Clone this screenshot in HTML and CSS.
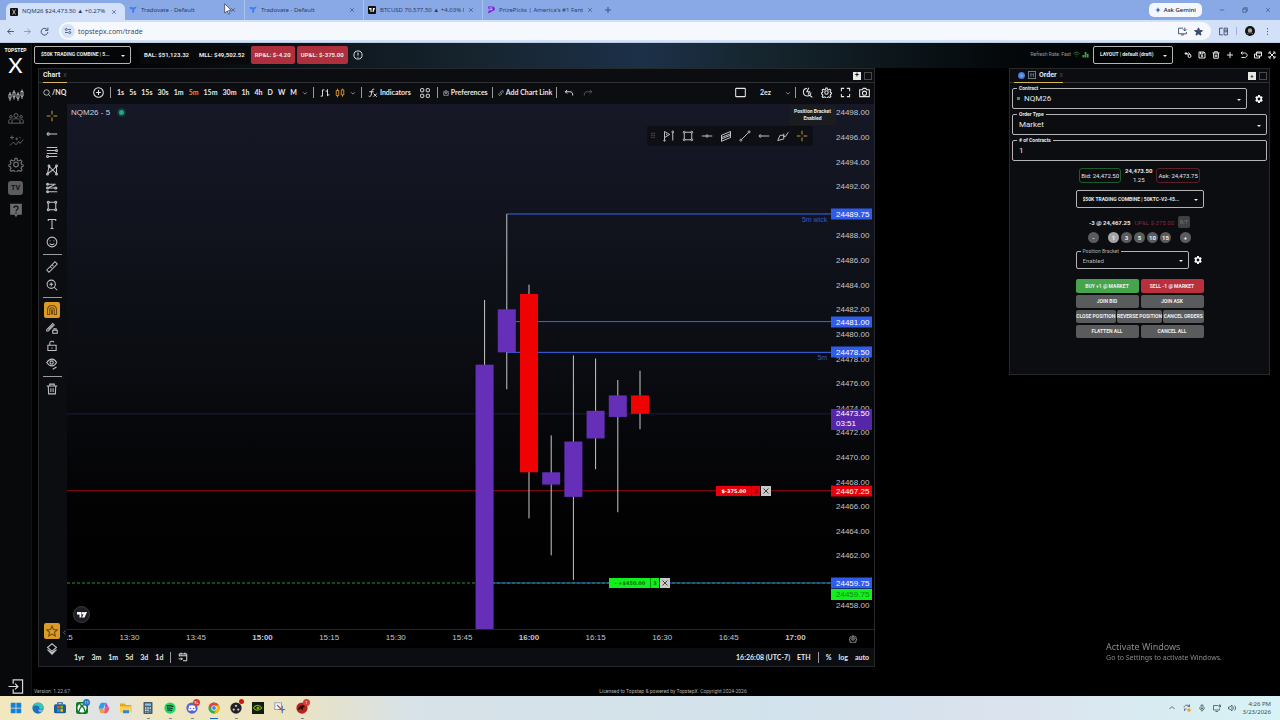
FILE: index.html
```
<!DOCTYPE html>
<html lang="en">
  <head>
    <meta charset="UTF-8" />
    <meta name="viewport" content="width=device-width, initial-scale=1" />
    <title>NQM26 $24,473.50 ▲ +0.27%</title>
    <link rel="stylesheet" href="styles.css">
  </head>
  <body>
    <svg class="sprite" aria-hidden="true">
      <symbol id="close" viewBox="0 0 16 16"><path d="M3 3l10 10M13 3L3 13" /></symbol>
      <symbol id="plus" viewBox="0 0 16 16"><path d="M8 2v12M2 8h12" /></symbol>
      <symbol id="chevron" viewBox="0 0 16 16"><path d="M3 6l5 5 5-5" /></symbol>
      <symbol id="back" viewBox="0 0 16 16"><path d="M14 8H3M8 3L3 8l5 5" /></symbol>
      <symbol id="forward" viewBox="0 0 16 16"><path d="M2 8h11M8 3l5 5-5 5" /></symbol>
      <symbol id="reload" viewBox="0 0 16 16"><path d="M13 5a6 6 0 1 0 1 4M14 1v5H9" /></symbol>
      <symbol id="tune" viewBox="0 0 16 16"><path d="M8 5h6M2 11h6" /><circle cx="4.500" cy="5" r="2" /><circle cx="11.500" cy="11" r="2" /></symbol>
      <symbol id="tradovate" viewBox="0 0 16 16"><path fill="#3f7cf0" stroke="none" d="M1 2l8 1 6-2-1 4-4 1 1 2-2 7-3-4 1-4-5-1z" /></symbol>
      <symbol id="star" viewBox="0 0 16 16"><path d="M8 1.500l2 4.500 5 .5-3.700 3.200 1.100 4.800L8 12l-4.400 2.500 1.100-4.800L1 6.500 6 6z" /></symbol>
      <symbol id="gear" viewBox="0 0 16 16"><circle cx="8" cy="8" r="2.500" /><path d="M7 1.500h2l.5 2 1.500.7 1.900-1 1.400 1.400-1 1.900.7 1.500 1.500.4v1.600l-1.500.5-.7 1.500 1 1.900-1.400 1.400-1.900-1-1.500.7-.5 1.500H7l-.5-1.500-1.500-.7-1.900 1-1.400-1.400 1-1.900-.7-1.500L.5 10V8.400L2 8l.7-1.500-1-1.900 1.400-1.400 1.900 1 1.500-.7z" /></symbol>
      <symbol id="gear-solid" viewBox="0 0 16 16"><path fill="currentColor" stroke="none" fill-rule="evenodd" d="M6.300 0h3.400l.5 2.300 1.400.8 2.200-.7 1.700 3-1.700 1.500v2.200l1.700 1.500-1.700 3-2.200-.7-1.400.8-.5 2.300H6.300l-.5-2.300-1.400-.8-2.200.7-1.700-3 1.700-1.500V6.900L.5 5.400l1.700-3 2.200.7 1.400-.8zM8 5.200a2.800 2.800 0 1 0 0 5.600 2.800 2.800 0 0 0 0-5.600z" /></symbol>
      <symbol id="candles" viewBox="0 0 24 20"><path d="M3 5v3M3 14v4M9 2v3M9 12v4M15 5v3M15 14v4M21 1v3M21 11v4M1.500 8h3v6h-3zM7.500 5h3v7h-3zM13.500 8h3v6h-3zM19.500 4h3v7h-3z" /></symbol>
      <symbol id="people" viewBox="0 0 24 18"><circle cx="12" cy="4.500" r="3" /><circle cx="4.500" cy="6.500" r="2" /><circle cx="19.500" cy="6.500" r="2" /><path d="M6 16v-3c0-5 12-5 12 0v3zM6 16H1v-3c0-2 2-3 4-3M18 16h5v-3c0-2-2-3-4-3" /></symbol>
      <symbol id="insights" viewBox="0 0 24 20"><path d="M3 16l5-5 4 4 4-5 2 3 5-6" /><path d="M6 1v6M3 4h6M13 4v4M11 6h4M17 3l2 2" /></symbol>
      <symbol id="help" viewBox="0 0 16 18"><path fill="currentColor" stroke="none" d="M1 1h14v13h-5l-2 3-2-3H1z" /><path stroke="#08090b" d="M5.500 6c0-3 5-3 5 0 0 2-2.500 2-2.500 4M8 11.500V13" /></symbol>
      <symbol id="logout" viewBox="0 0 16 16"><path d="M5 5V1h10v14H5v-4M0 8h10M7 5l3 3-3 3" /></symbol>
      <symbol id="search" viewBox="0 0 16 16"><circle cx="7" cy="7" r="5.500" /><path d="M11 11l4 4" /></symbol>
      <symbol id="plus-circle" viewBox="0 0 16 16"><circle cx="8" cy="8" r="7" /><path d="M8 4.500v7M4.500 8h7" /></symbol>
      <symbol id="info" viewBox="0 0 16 16"><circle cx="8" cy="8" r="6.500" /><path d="M8 4v5M8 11v1.500" /></symbol>
      <symbol id="bars" viewBox="0 0 16 16"><path d="M4 3v10M1 13h3M4 3h3M12 2v11M9 5h3M12 11h3" /></symbol>
      <symbol id="candle" viewBox="0 0 16 16"><path d="M2 4h4v8H2zM10 3h4v8h-4zM4 1v3M4 12v3M12 1v2M12 11v3" /></symbol>
      <symbol id="fx" viewBox="0 0 16 16"><path d="M10 2C7 1 6.500 3 6 6L5 11c-.5 3-2 3-4 2M2 6h7M9 9l5 5M14 9l-5 5" /></symbol>
      <symbol id="grid" viewBox="0 0 16 16"><rect x="1" y="1" width="5" height="5" rx="1" /><rect x="10" y="1" width="5" height="5" rx="1" /><rect x="1" y="10" width="5" height="5" rx="1" /><rect x="10" y="10" width="5" height="5" rx="1" /></symbol>
      <symbol id="link" viewBox="0 0 16 16"><path d="M7 9c-1-1-1-3 0-4l2.500-2.500c3-3 6 1 4 3.500L12 7.500M9 7c1 1 1 3 0 4l-2.500 2.500c-3 3-6-1-4-3.500L4 8.500" /></symbol>
      <symbol id="undo" viewBox="0 0 16 16"><path d="M5 3L2 6l3 3M2 6h7c4 0 5 2 5 6" /></symbol>
      <symbol id="redo" viewBox="0 0 16 16"><path d="M11 3l3 3-3 3M14 6H7c-4 0-5 2-5 6" /></symbol>
      <symbol id="square" viewBox="0 0 16 16"><rect x="1" y="2" width="14" height="12" rx="1" /></symbol>
      <symbol id="quick" viewBox="0 0 16 16"><path d="M7 2a5.500 5.500 0 1 0 6 6M11 12l4 3M10 1L7 7h4l-2 4" /></symbol>
      <symbol id="full" viewBox="0 0 16 16"><path d="M2 6V2h4M10 2h4v4M14 10v4h-4M6 14H2v-4" /></symbol>
      <symbol id="camera" viewBox="0 0 16 16"><path d="M1 4h4l1-2h4l1 2h4v10H1z" /><circle cx="8" cy="9" r="3" /></symbol>
      <symbol id="cross" viewBox="0 0 16 16"><path d="M8 1v5M8 10v5M1 8h5M10 8h5" /></symbol>
      <symbol id="ray" viewBox="0 0 16 16"><circle cx="3" cy="8" r="1.500" /><path d="M4.500 8H15" /></symbol>
      <symbol id="hline" viewBox="0 0 16 16"><circle cx="8" cy="8" r="1.500" /><path d="M1 8h5.500M9.500 8H15" /></symbol>
      <symbol id="fib" viewBox="0 0 16 16"><path d="M1 2h14M1 6h12M1 10h14M3 14h12" /><circle cx="14" cy="6" r="1.300" /><circle cx="2" cy="14" r="1.300" /></symbol>
      <symbol id="pattern" viewBox="0 0 16 16"><path d="M2 13L4 3l5 5 5-5v10L9 8zM2 13l7-5" /><circle cx="2" cy="13.500" r="1.200" /><circle cx="14" cy="13.500" r="1.200" /><circle cx="4" cy="2.500" r="1.200" /><circle cx="14" cy="2.500" r="1.200" /></symbol>
      <symbol id="forecast" viewBox="0 0 16 16"><path d="M1 3h12M1 8h14M1 13h14M4 7l7-3" /><circle cx="2" cy="3" r="1.300" /><circle cx="2" cy="8" r="1.300" /><circle cx="13" cy="8" r="1.300" /><circle cx="2" cy="13" r="1.300" /></symbol>
      <symbol id="rect" viewBox="0 0 16 16"><path d="M4 3h8M4 13h8M3 4v8M13 4v8" /><circle cx="3" cy="3" r="1.300" /><circle cx="13" cy="3" r="1.300" /><circle cx="3" cy="13" r="1.300" /><circle cx="13" cy="13" r="1.300" /></symbol>
      <symbol id="text" viewBox="0 0 16 16"><path d="M3 4V2h10v2M8 2v12M6 14h4" /></symbol>
      <symbol id="smile" viewBox="0 0 16 16"><circle cx="8" cy="8" r="6.500" /><path d="M5.500 6v1M10.500 6v1M5 10c1 2 5 2 6 0" /></symbol>
      <symbol id="ruler" viewBox="0 0 16 16"><path d="M1 12L12 1l3 3L4 15zM6 8l1.500 1.500M8.500 5.500L10 7" /></symbol>
      <symbol id="zoom" viewBox="0 0 16 16"><circle cx="7" cy="7" r="5.500" /><path d="M11 11l4 4M7 4.500v5M4.500 7h5" /></symbol>
      <symbol id="magnet" viewBox="0 0 16 16"><path d="M2 14V8c0-8 12-8 12 0v6h-3V8c0-4-6-4-6 0v6zM7.500 14V8h1v6" /></symbol>
      <symbol id="pencil-lock" viewBox="0 0 16 16"><path d="M1 10L9 2l2 2-8 8H1zM3 10l6-6M9 11h6v4H9zM10.500 11V9h3v2" /></symbol>
      <symbol id="lock" viewBox="0 0 16 16"><path d="M2.500 7h11v7h-11zM5 7V4c0-3 5-3 5.500-1M8 10v1.500" /></symbol>
      <symbol id="eye" viewBox="0 0 16 16"><path d="M1 6c4-6 10-6 13 0-3 6-9 6-13 0zM9 15l5-3" /><circle cx="7.500" cy="6" r="2.200" /></symbol>
      <symbol id="trash" viewBox="0 0 16 16"><path d="M1 4h14M5 4V1.500h6V4M3 4l.5 10.500h9L13 4M6.500 7v5M9.500 7v5" /></symbol>
      <symbol id="layers" viewBox="0 0 16 16"><path d="M8 1l6 5-6 5-6-5z" /><path fill="currentColor" d="M2 9l6 4 6-4-6 6z" /></symbol>
      <symbol id="position" viewBox="0 0 16 16"><path d="M2 14V2l7 4-7 4M5 5v2M13 3v11" /><circle cx="2" cy="14" r="1" /><circle cx="13" cy="2.500" r="1.200" /></symbol>
      <symbol id="channel" viewBox="0 0 16 16"><path d="M2 7l12-5v3L2 10zM2 12l12-5v3L2 15zM2 7v8M14 2v8" /></symbol>
      <symbol id="trend" viewBox="0 0 16 16"><circle cx="2.500" cy="13.500" r="1.300" /><circle cx="13.500" cy="2.500" r="1.300" /><path d="M3.500 12.500l9-9" /></symbol>
      <symbol id="brush" viewBox="0 0 16 16"><path d="M1 14l3-7h5v5zM8 8l3 1 4-6M9 5v3" /></symbol>
      <symbol id="calendar" viewBox="0 0 16 16"><path d="M2 7V3h12v11H8M2 6h12M5 1v3M11 1v3M1 11h6M5 9l2 2-2 2" /></symbol>
      <symbol id="save" viewBox="0 0 16 16"><path d="M2 2h10l2 2v10H2zM5 2v4h5V2" /><circle cx="8" cy="10" r="1.500" /></symbol>
      <symbol id="history" viewBox="0 0 16 16"><path d="M5 1L2 4l3 3M2 4h7c7 0 7 9 0 9H3" /></symbol>
      <symbol id="windows" viewBox="0 0 16 16"><path d="M5 2h10v8H5zM5 6H1v8h10v-4M5 4h10" /></symbol>
      <symbol id="expand" viewBox="0 0 16 16"><path d="M2 6V2h4M10 2h4v4M14 10v4h-4M6 14H2v-4M3 3l10 10M13 3L3 13" /></symbol>
      <symbol id="swap" viewBox="0 0 16 16"><path d="M5 2L2 5l3 3M2 5h5l1 3M8 3l5 4" /><circle cx="11" cy="10" r="3" /></symbol>
      <symbol id="wifi" viewBox="0 0 16 16"><path d="M1 6c4-4 10-4 14 0M4 9c3-2 5-2 8 0M7 12h2" /></symbol>
      <symbol id="signal" viewBox="0 0 16 16"><path fill="currentColor" stroke="none" d="M1 9h4v6H1zM6 2h4v13H6zM11 6h4v9h-4z" /></symbol>
    </svg>

    <div class="tabs">
      <div class="tab active">
        <svg class="fav" viewBox="0 0 16 16"><rect width="16" height="16" rx="2" fill="#111" stroke="none" /><path stroke="#ddd" d="M5 3l6 10M11 3L5 13" /></svg>
        <span>NQM26 $24,473.50 ▲ +0.27%</span>
        <button aria-label="Close"><svg><use href="#close" /></svg></button>
      </div>
      <div class="tab">
        <svg class="fav"><use href="#tradovate" /></svg>
        <span>Tradovate - Default</span>
        <button aria-label="Close"><svg><use href="#close" /></svg></button>
      </div>
      <div class="tab">
        <svg class="fav"><use href="#tradovate" /></svg>
        <span>Tradovate - Default</span>
        <button aria-label="Close"><svg><use href="#close" /></svg></button>
      </div>
      <div class="tab">
        <svg class="fav" viewBox="0 0 16 16"><rect width="16" height="16" rx="2" fill="#111" stroke="none" /><path fill="#fff" stroke="none" d="M2 4h5v8H5V7H2zM10 4h4l-3 8H9z" /></svg>
        <span>BTCUSD 70,577.50 ▲ +4.03% P</span>
        <button aria-label="Close"><svg><use href="#close" /></svg></button>
      </div>
      <div class="tab">
        <svg class="fav" viewBox="0 0 16 16"><path fill="#7b16d9" stroke="none" d="M2 1h9c6 0 6 9 0 9l-9 5 2-7z" /><path stroke="#fff" d="M5 4h6M4 8l7-1" /></svg>
        <span>PrizePicks | America's #1 Fanta</span>
        <button aria-label="Close"><svg><use href="#close" /></svg></button>
      </div>
      <button class="new-tab" aria-label="New tab"><svg><use href="#plus" /></svg></button>
      <button class="gemini">
        <svg viewBox="0 0 16 16"><path fill="#2f6fd0" stroke="none" d="M8 0c1 5 3 7 8 8-5 1-7 3-8 8-1-5-3-7-8-8 5-1 7-3 8-8z" /></svg>
        Ask Gemini
      </button>
      <div class="win">
        <button aria-label="Minimize"><svg viewBox="0 0 16 16"><path d="M2 8h12" /></svg></button>
        <button aria-label="Restore"><svg viewBox="0 0 16 16"><path d="M2 5h9v9H2zM5 5V2h9v9h-3" /></svg></button>
        <button aria-label="Close window"><svg><use href="#close" /></svg></button>
      </div>
      <svg class="cursor" viewBox="0 0 12 18"><path fill="#fff" stroke="#56617c" d="M1 1v14l4-3 2 5 2-1-2-5h4z" /></svg>
    </div>

    <div class="address">
      <button aria-label="Back"><svg><use href="#back" /></svg></button>
      <button aria-label="Forward" class="off"><svg><use href="#forward" /></svg></button>
      <button aria-label="Reload"><svg><use href="#reload" /></svg></button>
      <div class="omnibox">
        <i><svg><use href="#tune" /></svg></i>
        <input type="text" aria-label="Address" value="topstepx.com/trade" />
        <svg viewBox="0 0 16 16"><path d="M9 2H1v10h14V9M5 14h6M12 1v6M9 4l3 3 3-3" /></svg>
        <svg class="fill"><use href="#star" /></svg>
      </div>
      <svg class="ext" viewBox="0 0 16 16"><path d="M7 2H1v12h6M9 2h6v12H9z" /><circle cx="12" cy="7" r="2" /></svg>
      <span class="bar"></span>
      <svg class="avatar" viewBox="0 0 16 16"><circle cx="8" cy="8" r="8" fill="#111" stroke="none" /><circle cx="8" cy="7" r="3.500" fill="#a9a99f" stroke="none" /><path stroke="#777" d="M3 13c3-3 7-3 10 0" /></svg>
      <svg viewBox="0 0 16 16"><path d="M8 2v2M8 7v2M8 12v2" /></svg>
    </div>

    <div class="app">
      <nav>
        <a class="logo" href="#"><small>TOPSTEP</small><b>X</b></a>
        <a class="on" href="#" aria-label="Trade"><svg><use href="#candles" /></svg></a>
        <a href="#" aria-label="Community"><svg><use href="#people" /></svg></a>
        <a href="#" aria-label="Insights"><svg><use href="#insights" /></svg></a>
        <a href="#" aria-label="Settings"><svg><use href="#gear" /></svg></a>
        <a href="#" aria-label="TV"><span class="tv">TV</span></a>
        <a href="#" aria-label="Help"><svg><use href="#help" /></svg></a>
        <a class="out" href="#" aria-label="Log out"><svg><use href="#logout" /></svg></a>
      </nav>

      <div class="main">
        <header>
          <div class="select account">
            <select aria-label="Account"><option>$50K TRADING COMBINE | 5...</option></select>
          </div>
          <span class="stat">BAL: $51,123.32</span>
          <span class="stat">MLL: $49,502.52</span>
          <span class="stat red">RP&amp;L: $-4.20</span>
          <span class="stat red">UP&amp;L: $-375.00</span>
          <svg class="info"><use href="#info" /></svg>
          <span class="rate">Refresh Rate: Fast</span>
          <svg class="green"><use href="#wifi" /></svg>
          <svg class="green"><use href="#signal" /></svg>
          <div class="select layout">
            <select aria-label="Layout"><option>LAYOUT | default (draft)</option></select>
          </div>
          <div class="tools">
            <button aria-label="Swap"><svg><use href="#swap" /></svg></button>
            <button aria-label="Save"><svg><use href="#save" /></svg></button>
            <button aria-label="Delete"><svg><use href="#trash" /></svg></button>
            <button aria-label="Add"><svg><use href="#plus" /></svg></button>
            <button aria-label="Reset"><svg><use href="#history" /></svg></button>
            <button aria-label="Windows"><svg><use href="#windows" /></svg></button>
            <button aria-label="Full screen"><svg><use href="#expand" /></svg></button>
          </div>
        </header>

        <div class="workspace">
          <section class="panel chart">
            <div class="panel-head">
              <div class="panel-tab">Chart <em>x</em></div>
              <button class="add" aria-label="Add tab">+</button>
              <button class="max" aria-label="Maximize"></button>
            </div>

            <div class="chart-bar">
              <button class="symbol"><svg><use href="#search" /></svg>/NQ</button>
              <button aria-label="Compare"><svg class="big"><use href="#plus-circle" /></svg></button>
              <hr />
              <div class="times">
                <button>1s</button><button>5s</button><button>15s</button><button>30s</button><button>1m</button><button class="on">5m</button><button>15m</button><button>30m</button><button>1h</button><button>4h</button><button>D</button><button>W</button><button>M</button>
                <button aria-label="More intervals"><svg class="small"><use href="#chevron" /></svg></button>
              </div>
              <hr />
              <div class="kinds">
                <button aria-label="Bars"><svg><use href="#bars" /></svg></button>
                <button aria-label="Candles" class="on"><svg><use href="#candle" /></svg></button>
                <button aria-label="More types"><svg class="small"><use href="#chevron" /></svg></button>
              </div>
              <hr />
              <div class="studies">
                <button><svg><use href="#fx" /></svg>Indicators</button>
                <button aria-label="Templates"><svg><use href="#grid" /></svg></button>
              </div>
              <hr />
              <button class="pref"><svg class="small"><use href="#gear" /></svg>Preferences</button>
              <hr />
              <button class="pref"><svg class="small"><use href="#link" /></svg>Add Chart Link</button>
              <hr />
              <div class="undo">
                <button aria-label="Undo"><svg><use href="#undo" /></svg></button>
                <button aria-label="Redo" class="off"><svg><use href="#redo" /></svg></button>
              </div>
              <div class="saved">
                <button aria-label="Layout"><svg class="big"><use href="#square" /></svg></button>
                <button>2ez</button>
                <button aria-label="Saved layouts"><svg class="small"><use href="#chevron" /></svg></button>
              </div>
              <hr />
              <div class="views">
                <button aria-label="Quick search"><svg class="big"><use href="#quick" /></svg></button>
                <button aria-label="Chart settings"><svg class="big"><use href="#gear" /></svg></button>
                <button aria-label="Fullscreen"><svg class="big"><use href="#full" /></svg></button>
                <button aria-label="Snapshot"><svg class="big"><use href="#camera" /></svg></button>
              </div>
            </div>

            <div class="chart-body">
              <div class="draw">
                <button class="gold" aria-label="Cross"><svg><use href="#cross" /></svg></button>
                <button aria-label="Ray"><svg><use href="#ray" /></svg></button>
                <button aria-label="Fib"><svg><use href="#fib" /></svg></button>
                <button aria-label="Pattern"><svg><use href="#pattern" /></svg></button>
                <button aria-label="Forecast"><svg><use href="#forecast" /></svg></button>
                <button aria-label="Shapes"><svg><use href="#rect" /></svg></button>
                <button aria-label="Text"><svg><use href="#text" /></svg></button>
                <button aria-label="Icons"><svg><use href="#smile" /></svg></button>
                <hr />
                <button aria-label="Measure"><svg><use href="#ruler" /></svg></button>
                <button aria-label="Zoom in"><svg><use href="#zoom" /></svg></button>
                <hr />
                <button class="lit" aria-label="Magnet"><svg><use href="#magnet" /></svg></button>
                <button aria-label="Stay in drawing mode"><svg><use href="#pencil-lock" /></svg></button>
                <button aria-label="Lock drawings"><svg><use href="#lock" /></svg></button>
                <button aria-label="Hide drawings"><svg><use href="#eye" /></svg></button>
                <hr />
                <button aria-label="Remove"><svg><use href="#trash" /></svg></button>
                <button class="lit fav-tools" aria-label="Favorites"><svg><use href="#star" /></svg></button>
                <button aria-label="Object tree"><svg><use href="#layers" /></svg></button>
                <svg class="fold" viewBox="0 0 16 16"><path d="M11 2L5 8l6 6" /></svg>
              </div>

              <div class="view">
                <div class="price-row">
                  <div class="plot" id="plot">
                    <svg class="lines" id="lines"></svg>
                    <div class="legend">NQM26 - 5 <i></i></div>
                    <div class="float">
                      <span class="grip">⠿</span>
                      <button aria-label="Position"><svg><use href="#position" /></svg></button>
                      <button aria-label="Rectangle"><svg><use href="#rect" /></svg></button>
                      <button aria-label="Horizontal line"><svg><use href="#hline" /></svg></button>
                      <button aria-label="Channel"><svg><use href="#channel" /></svg></button>
                      <button aria-label="Trend line"><svg><use href="#trend" /></svg></button>
                      <button aria-label="Horizontal ray"><svg><use href="#ray" /></svg></button>
                      <button aria-label="Brush"><svg><use href="#brush" /></svg></button>
                      <button aria-label="Cross" class="gold"><svg><use href="#cross" /></svg></button>
                    </div>
                    <div class="tip">Position Bracket<br />Enabled</div>
                    <a class="tv-logo" href="#" aria-label="TradingView"><svg viewBox="0 0 16 16"><path fill="#fff" stroke="none" d="M0 3h7v9H4V7H0zM12 3h4l-4 9H8z" /><circle cx="9.500" cy="5" r="2" fill="#fff" stroke="none" /></svg></a>
                  </div>
                  <div class="prices" id="prices"></div>
                </div>
                <div class="time-row">
                  <div class="hours" id="hours"></div>
                  <button aria-label="Scale settings"><svg><use href="#gear" /></svg></button>
                </div>
                <div class="range">
                  <button>1yr</button><button>3m</button><button>1m</button><button>5d</button><button>3d</button><button>1d</button>
                  <hr />
                  <button aria-label="Go to date"><svg><use href="#calendar" /></svg></button>
                  <span class="clock">16:26:08 (UTC-7)</span>
                  <button>ETH</button>
                  <hr />
                  <button>%</button>
                  <button>log</button>
                  <button>auto</button>
                </div>
              </div>
            </div>
          </section>

          <section class="panel order">
            <div class="panel-head">
              <div class="panel-tab"><i class="ball"></i><i class="box">H</i>Order <em>x</em></div>
              <button class="add" aria-label="Add tab">+</button>
              <button class="max" aria-label="Maximize"></button>
            </div>
            <div class="order-body">
              <div class="with-gear">
                <div class="field select contract">
                  <label for="contract">Contract</label>
                  <select id="contract"><option>NQM26</option></select>
                </div>
                <button aria-label="Contract settings"><svg><use href="#gear-solid" /></svg></button>
              </div>
              <div class="field select">
                <label for="type">Order Type</label>
                <select id="type"><option>Market</option></select>
              </div>
              <div class="field">
                <label for="count"># of Contracts</label>
                <input type="text" id="count" value="1" />
              </div>

              <div class="ticket">
                <div class="quote">
                  <span class="bid">Bid: 24,472.50</span>
                  <div><b>24,473.50</b>1.25</div>
                  <span class="ask">Ask: 24,473.75</span>
                </div>
                <div class="select combine">
                  <select aria-label="Trading account"><option>$50K TRADING COMBINE | 50KTC-V2-45...</option></select>
                </div>
                <div class="position">
                  <b>-3 @ 24,467.25</b>
                  <span>UP&amp;L $-375.00</span>
                  <button disabled>R/T</button>
                </div>
                <div class="sizes">
                  <button>-</button>
                  <div>
                    <button class="on">1</button><button>3</button><button>5</button><button>10</button><button>15</button>
                  </div>
                  <button>+</button>
                </div>
                <div class="with-gear">
                  <div class="field select bracket">
                    <label for="bracket">Position Bracket</label>
                    <select id="bracket"><option>Enabled</option></select>
                  </div>
                  <button aria-label="Bracket settings"><svg><use href="#gear-solid" /></svg></button>
                </div>
                <div class="actions">
                  <div class="trade">
                    <button class="buy">BUY +1 @ MARKET</button>
                    <button class="sell">SELL -1 @ MARKET</button>
                  </div>
                  <div><button>JOIN BID</button><button>JOIN ASK</button></div>
                  <div class="three"><button>CLOSE POSITION</button><button>REVERSE POSITION</button><button>CANCEL ORDERS</button></div>
                  <div><button>FLATTEN ALL</button><button>CANCEL ALL</button></div>
                </div>
              </div>
            </div>
          </section>
        </div>

        <footer>
          <span>Version: 1.22.67</span>
          <p>Licensed to Topstep &amp; powered by TopstepX. Copyright 2024-2026</p>
        </footer>
      </div>
    </div>

    <div class="taskbar">
      <a href="#" aria-label="Start"><svg viewBox="0 0 16 16"><path fill="#1480d8" d="M1 1h6.500v6.500H1zM8.500 1H15v6.500H8.500zM1 8.500h6.500V15H1zM8.500 8.500H15V15H8.500z" /></svg></a>
      <a href="#" aria-label="Edge"><svg viewBox="0 0 16 16"><circle cx="8" cy="8" r="7.500" fill="#1673c4" /><path fill="#38c7b5" d="M1 6c2-7 14-7 14.500 1 0 4-5 4-6 2 2-4-4-6-8.500-3z" /><path fill="#f4efdc" d="M9 9c0 3 4 3 6 1.500-1 2-4 3-6 1.500z" /></svg></a>
      <a href="#" aria-label="Store"><svg viewBox="0 0 16 16"><rect y="3" width="16" height="12" rx="2" fill="#1a5f9c" /><path fill="none" stroke="#1a5f9c" d="M5 3V1h6v2" /><path fill="#f25022" d="M4 5h3.500v3.500H4z" /><path fill="#7fba00" d="M8.500 5H12v3.500H8.500z" /><path fill="#00a4ef" d="M4 9.500h3.500V13H4z" /><path fill="#ffb900" d="M8.500 9.500H12V13H8.500z" /></svg></a>
      <a href="#" aria-label="Xbox"><svg viewBox="0 0 16 16"><rect width="16" height="16" rx="3" fill="#0e7a2a" /><circle cx="8" cy="8" r="6" fill="#fff" /><path fill="none" stroke="#0e7a2a" stroke-width="2" d="M4 13c0-4 2-6 4-8 2 2 4 4 4 8M5 3l3 2 3-2" /></svg><i class="badge blue">11</i></a>
      <a href="#" aria-label="Copilot"><svg viewBox="0 0 16 16"><path fill="#2aa0e8" d="M5 1h5L7 9H1c0-3 2-8 4-8z" /><path fill="#c04bd8" d="M10 1c3 0 2 5 5 6H9z" /><path fill="#f0a030" d="M1 9h6l2 6H5c-3 0-2-4-4-6z" /><path fill="#ee5a6a" d="M9 7h6c0 3-2 8-5 8H8z" /></svg></a>
      <a href="#" aria-label="Files"><svg viewBox="0 0 16 16"><path fill="#e8a520" d="M0 2h6l2 2h7v9H0z" /><path fill="#fbd254" d="M0 6h16v8H0z" /><path fill="#2f86d8" d="M4 11h8v4H4z" /></svg></a>
      <a class="open" href="#" aria-label="Calculator"><svg viewBox="0 0 16 16"><rect x="2" width="12" height="16" rx="1" fill="#4a5a68" /><path fill="#7fc8ee" d="M4 2h8v3H4z" /><path fill="#dfe6ea" d="M4 7h2v2H4zM7 7h2v2H7zM10 7h2v2h-2zM4 10h2v2H4zM7 10h2v2H7zM4 13h2v1H4zM7 13h2v1H7z" /><path fill="#38a0e0" d="M10 10h2v4h-2z" /></svg></a>
      <a class="open" href="#" aria-label="Spotify"><svg viewBox="0 0 16 16"><circle cx="8" cy="8" r="7.500" fill="#1ed760" /><path fill="none" stroke="#123" stroke-width="1.500" d="M3.500 5.500c3-1 6-1 9 1M4 8.500c3-1 5-.5 7.500 1M4.500 11c2-.5 4-.5 6 .7" /></svg></a>
      <a class="open" href="#" aria-label="Discord"><svg viewBox="0 0 16 16"><circle cx="8" cy="8" r="7.500" fill="#5561d8" /><path fill="#fff" d="M4 5c2-1 6-1 8 0l1 6-3 1-1-1H7l-1 1-3-1z" /><circle cx="6" cy="8.500" r="1" fill="#5561d8" /><circle cx="10" cy="8.500" r="1" fill="#5561d8" /></svg><i class="badge">9+</i></a>
      <a class="open current" href="#" aria-label="Chrome"><svg viewBox="0 0 16 16"><circle cx="8" cy="8" r="7.500" fill="#34a853" /><path fill="#ea4335" d="M1.500 4.200A7.500 7.500 0 0 1 14.500 4.500H8L5 9z" /><path fill="#fbbc05" d="M14.500 4.500A7.500 7.500 0 0 1 8 15.500L11 9.500 10 4.500z" /><circle cx="8" cy="8" r="3.500" fill="#fff" /><circle cx="8" cy="8" r="2.600" fill="#4285f4" /></svg></a>
      <a class="open" href="#" aria-label="OBS"><svg viewBox="0 0 16 16"><circle cx="8" cy="8" r="7.500" fill="#222" /><circle cx="8" cy="5" r="1.500" fill="#ccc" /><circle cx="5" cy="10" r="1.500" fill="#ccc" /><circle cx="11" cy="10" r="1.500" fill="#ccc" /></svg><i class="badge dot"></i></a>
      <a href="#" aria-label="NVIDIA"><svg viewBox="0 0 16 16"><rect width="16" height="16" fill="#131a10" /><path fill="none" stroke="#76b900" stroke-width="1.500" d="M2 8c3-5 8-5 11 0-3 4-8 4-11 0z" /><circle cx="8" cy="8" r="2" fill="#76b900" /></svg></a>
      <a href="#" aria-label="Snip"><svg viewBox="0 0 16 16"><path fill="#f7f7f7" stroke="#9aa5b5" d="M1 1h9v9H1z" /><path fill="none" stroke="#b84a3a" stroke-width="1.500" d="M4 4l8 8" /><path fill="none" stroke="#3a78c8" stroke-width="1.500" d="M11 5v10M6 10h9" /></svg></a>
      <a class="open" href="#" aria-label="App"><svg viewBox="0 0 16 16"><circle cx="8" cy="8" r="7.500" fill="#b3261c" /><path fill="#2a0c0a" d="M2 11c2-6 6-8 11-6-3 1-4 3-4 6l-3-2z" /></svg><i class="badge">1</i></a>
      <div class="tray">
        <svg viewBox="0 0 16 16"><path d="M3 10l5-5 5 5" /></svg>
        <svg viewBox="0 0 16 16"><path d="M2 7c1-6 9-6 11-2M13 1v4H9M3 14v-4h4" /><circle cx="12" cy="12" r="3.500" fill="#eda028" stroke="none" /></svg>
        <svg viewBox="0 0 16 16"><path d="M6 2h4v7H6zM3 7c0 7 10 7 10 0M8 12v3" /></svg>
        <svg viewBox="0 0 16 16"><path d="M10 3H1v9h12V9M5 15h5M12 2h3v4h-3z" /></svg>
        <svg viewBox="0 0 16 16"><path d="M1 6h3l4-4v12l-4-4H1zM10 5c2 2 2 4 0 6M13 3c3 3 3 7 0 10" /></svg>
        <div class="date">4:26 PM<br />3/23/2026</div>
      </div>
    </div>

    <div class="activate"><b>Activate Windows</b>Go to Settings to activate Windows.</div>

    <script src="script.js"></script>
  </body>
</html>
```
FILE: styles.css
```
* {
  box-sizing: border-box;
}
body {
  margin: 0;
  min-height: 100vh;
  display: flex;
  flex-direction: column;
  background: #000;
  color: #e6e6e6;
  font-family: Roboto, sans-serif;
  font-size: 7px;
  line-height: 9px;
}
button,
select,
input {
  font: inherit;
  color: inherit;
  background: none;
  border: 0;
  margin: 0;
  padding: 0;
}
button {
  display: flex;
  align-items: center;
  justify-content: center;
  white-space: nowrap;
}
a {
  color: inherit;
  text-decoration: none;
}
i,
em {
  font-style: normal;
}
svg {
  width: 10px;
  height: 10px;
  flex: none;
  fill: none;
  stroke: currentColor;
  stroke-width: 1.5px;
}
.sprite {
  position: absolute;
  width: 0;
  height: 0;
}

/* browser */
.tabs {
  position: relative;
  height: 20px;
  display: flex;
  align-items: center;
  padding-left: 6px;
  background: #89a9e6;
  color: #2a3c66;
  font-family: "Noto Sans", sans-serif;
  font-size: 6px;
}
.tab {
  width: 119px;
  height: 100%;
  display: flex;
  align-items: center;
  gap: 4px;
  padding: 0 8px 0 4px;
}
.tab span {
  flex: 1;
  overflow: hidden;
  white-space: nowrap;
}
.tab svg {
  width: 6px;
  height: 6px;
}
.tab .fav {
  width: 8px;
  height: 8px;
}
.tab.active {
  height: 17px;
  align-self: flex-end;
  background: #d3e0f9;
  border-radius: 6px 6px 0 0;
}
.tab + .tab + .tab {
  border-left: 1px solid #a9c1ef;
}
.new-tab {
  margin-left: 3px;
}
.new-tab svg {
  width: 8px;
  height: 8px;
}
.gemini {
  margin-left: auto;
  height: 14px;
  padding: 0 6px;
  gap: 3px;
  background: #f4f7fe;
  border-radius: 5px;
  color: #222;
  font-weight: 500;
}
.gemini svg {
  width: 6px;
  height: 6px;
}
.win {
  display: flex;
  gap: 17px;
  margin: 0 9px 0 17px;
}
.win svg {
  width: 6px;
  height: 6px;
}
.cursor {
  position: absolute;
  left: 224px;
  top: 3px;
  width: 8px;
  height: 12px;
}
.address {
  height: 23px;
  display: flex;
  align-items: center;
  gap: 8px;
  padding: 0 8px 0 6px;
  background: #d2e0f8;
  border-bottom: 1px solid #b9cbe0;
  color: #33415f;
  font-family: "Open Sans", sans-serif;
}
.address svg {
  width: 9px;
  height: 9px;
}
.address .off {
  opacity: 0.5;
}
.omnibox {
  flex: 1;
  height: 18px;
  display: flex;
  align-items: center;
  gap: 7px;
  margin-left: 2px;
  padding: 0 8px 0 2px;
  background: #f5f9fe;
  border-radius: 9px;
}
.omnibox i {
  width: 14px;
  height: 14px;
  display: flex;
  align-items: center;
  justify-content: center;
  background: #d6e2f6;
  border-radius: 50%;
}
.omnibox i svg {
  width: 8px;
  height: 8px;
}
.omnibox input {
  flex: 1;
  margin-left: -4px;
}
.omnibox .fill {
  fill: #35507f;
}
.address .bar {
  width: 1px;
  height: 8px;
  background: #9fb3d8;
}
.address .avatar {
  width: 10px;
  height: 10px;
}

/* app shell */
.app {
  flex: 1;
  display: flex;
}
nav {
  width: 32px;
  display: flex;
  flex-direction: column;
  align-items: center;
  padding: 4px 0 3px;
  background: #08090b;
  border-right: 1px solid #121316;
}
nav a {
  height: 23px;
  display: flex;
  align-items: center;
  color: #6b6c6e;
}
nav svg {
  width: 16px;
  height: 15px;
  stroke-width: 1.3px;
}
nav .on,
nav .out {
  color: #d8d8d8;
}
nav .logo {
  height: 37px;
  flex-direction: column;
  color: #fff;
}
nav .logo small {
  font-size: 5px;
  line-height: 6px;
  font-weight: bold;
}
nav .logo b {
  font: 22px/24px Lato, sans-serif;
}
nav .out {
  margin-top: auto;
  height: 14px;
}
.tv {
  width: 15px;
  height: 14px;
  border-radius: 3px;
  background: #5b5c5e;
  color: #111;
  line-height: 14px;
  text-align: center;
  font-weight: bold;
}
.main {
  flex: 1;
  min-width: 0;
  display: flex;
  flex-direction: column;
}
header {
  height: 25px;
  display: flex;
  align-items: center;
  padding: 0 4px 2px 2px;
  background: linear-gradient(90deg, #000 5%, #16242e 35%, #1c3049 49%, #16262f 58%, #04080a 78%, #000);
  font-size: 6px;
  font-weight: bold;
}
.select {
  position: relative;
  border: 1px solid #b4b4b4;
  border-radius: 2px;
}
.select::after {
  content: "";
  position: absolute;
  right: 5px;
  top: 50%;
  border: 2px solid transparent;
  border-top-color: #eee;
}
.select select {
  appearance: none;
  width: 100%;
  height: 100%;
  padding: 0 12px 0 6px;
  text-overflow: ellipsis;
}
header .select,
.combine {
  font-size: 5px;
}
.account {
  width: 97px;
  height: 18px;
  margin-right: 9px;
  background: #050607;
}
.stat {
  height: 18px;
  padding: 0 4px;
  margin-right: 2px;
  line-height: 18px;
  background: #07090b;
  border-radius: 2px;
  white-space: nowrap;
}
.stat.red {
  background: #b02f3c;
}
header .info {
  margin-left: 3px;
  margin-right: auto;
}
.rate {
  font-size: 5px;
  font-weight: normal;
  color: #9b9b9b;
}
.green {
  color: #43a047;
  width: 7px;
  height: 7px;
  margin-left: 2px;
}
.layout {
  width: 80px;
  height: 18px;
  margin: 0 11px 0 4px;
  background: #020303;
}
.tools {
  display: flex;
  gap: 6px;
}
.tools svg {
  width: 8px;
  height: 8px;
  stroke-width: 2px;
}
.workspace {
  flex: 1;
  display: grid;
  grid-template-columns: minmax(0, 1fr) 261px;
  column-gap: 134px;
  padding: 0 10px 0 6px;
}
.panel {
  background: #0c0d10;
  border: 1px solid #26282b;
  display: flex;
  flex-direction: column;
}
.panel-head {
  height: 14px;
  display: flex;
  align-items: center;
  gap: 3px;
  padding: 0 2px 0 4px;
  border-bottom: 1px solid #303236;
}
.panel-tab {
  height: 14px;
  display: flex;
  align-items: center;
  gap: 3px;
  margin-right: auto;
  font-weight: bold;
  border-bottom: 1px solid #d9b65c;
}
.panel-tab em {
  color: #4a4b4e;
  font-weight: normal;
}
.add {
  width: 8px;
  height: 8px;
  background: #e8e8e8;
  color: #111;
  font-weight: bold;
}
.max {
  width: 8px;
  height: 8px;
  border: 1px solid #48494b;
}

/* chart */
.chart-bar button,
.range button,
.range .clock {
  font-family: Lato, sans-serif;
  font-weight: bold;
}
.chart hr {
  width: 1px;
  height: 11px;
  margin: 0;
  border: 0;
  background: #9a9b9d;
}
.chart svg.small {
  width: 6px;
  height: 6px;
}
.chart-bar {
  height: 21px;
  display: flex;
  align-items: center;
  padding: 0 4px 2px;
}
.chart-bar svg.big {
  width: 11px;
  height: 11px;
}
.chart-bar .symbol {
  width: 50px;
  justify-content: flex-start;
  gap: 1px;
}
.chart-bar .symbol svg {
  width: 8px;
  height: 8px;
}
.chart-bar > button + hr {
  margin-left: 6px;
}
.times {
  display: flex;
  gap: 5px;
  margin: 0 5px 0 6px;
}
.kinds {
  display: flex;
  gap: 5px;
  margin: 0 5px 0 6px;
}
.studies {
  display: flex;
  gap: 9px;
  margin: 0 7px 0 6px;
}
.studies button {
  gap: 2px;
}
.on {
  color: #e0962a;
}
.chart-bar .pref {
  margin-left: 5px;
  gap: 2px;
}
.chart-bar .pref + hr {
  margin-left: 4px;
}
.undo {
  display: flex;
  gap: 9px;
  margin-left: 7px;
  margin-right: auto;
}
.off {
  opacity: 0.35;
}
.saved {
  display: flex;
  gap: 14px;
  margin-right: 4px;
}
.views {
  display: flex;
  gap: 8px;
  margin-left: 6px;
}
.chart-body {
  flex: 1;
  display: flex;
}
.draw {
  position: relative;
  width: 28px;
  display: flex;
  flex-direction: column;
  align-items: center;
  padding: 3px 2px 8px 0;
  color: #c0c1c3;
}
.draw button {
  width: 18px;
  height: 18px;
}
.draw svg {
  width: 12px;
  height: 12px;
  stroke-width: 1.4px;
}
.draw hr {
  width: 19px;
  margin: 3px 0;
  height: 1px;
}
.draw .lit {
  width: 16px;
  height: 16px;
  margin: 1px;
  background: #dc9a26;
  border-radius: 2px;
  color: #6a4a10;
}
.draw .fav-tools {
  margin-top: auto;
}
.draw .fold {
  position: absolute;
  right: 0;
  bottom: 31px;
  width: 5px;
  height: 5px;
}
.gold {
  color: #c39a35;
}
.view {
  flex: 1;
  min-width: 0;
  display: flex;
  flex-direction: column;
  font-family: "Liberation Sans", sans-serif;
  font-size: 8px;
}
.price-row {
  flex: 1;
  display: flex;
  background: linear-gradient(#161827, #0c0e14 45%, #020203 78%, #000);
}
.plot {
  flex: 1;
  position: relative;
}
.lines {
  position: absolute;
  width: 100%;
  height: 100%;
}
.lines text {
  fill: #3157d8;
  stroke: none;
  text-anchor: end;
  font-size: 7px;
}
.wick {
  stroke: #c8c8c8;
  stroke-width: 1px;
}
.up {
  fill: #652fb8;
  stroke: none;
}
.down {
  fill: #ee0202;
  stroke: none;
}
.level {
  stroke: #3a66f2;
  stroke-width: 1px;
}
.last {
  stroke: #1c1a40;
  stroke-width: 1px;
}
.entry {
  stroke: #9c0a12;
  stroke-width: 1px;
}
.target {
  stroke: #2a9a3a;
  stroke-width: 1px;
  stroke-dasharray: 3 2;
}
.legend {
  position: absolute;
  left: 4px;
  top: 4px;
  display: flex;
  align-items: center;
  gap: 9px;
  color: #d0d1d6;
}
.legend i {
  width: 5px;
  height: 5px;
  border-radius: 50%;
  background: #28a487;
  box-shadow: 0 0 0 2px #123a38;
}
.float {
  position: absolute;
  right: 18px;
  top: 22px;
  height: 20px;
  display: flex;
  align-items: center;
  gap: 7px;
  padding: 0 5px 0 3px;
  background: #0e0f14;
  border-radius: 2px;
  color: #c0c1c3;
}
.float svg {
  width: 12px;
  height: 12px;
  stroke-width: 1.3px;
}
.grip {
  color: #55565a;
}
.tip {
  position: absolute;
  z-index: 1;
  right: -5px;
  top: 1px;
  padding: 3px 5px;
  background: #1b1c20;
  border-radius: 2px;
  font: bold 5px/7px Roboto, sans-serif;
  text-align: center;
  white-space: nowrap;
}
.tv-logo {
  position: absolute;
  left: 6px;
  bottom: 6px;
  width: 17px;
  height: 17px;
  display: flex;
  align-items: center;
  justify-content: center;
  background: #1d1e24;
  border: 1px solid #3a3b40;
  border-radius: 50%;
}
.tag {
  position: absolute;
  display: flex;
  height: 10px;
  transform: translateY(-50%);
  font: bold 5px/10px "DejaVu Sans", sans-serif;
}
.tag span {
  padding: 0 5px;
  white-space: nowrap;
}
.tag span + span {
  padding: 0 2px;
  border-left: 1px solid rgba(0, 0, 0, 0.4);
}
.tag button {
  width: 10px;
  margin-left: 1px;
  background: #c9c9c9;
  color: #111;
}
.tag button svg {
  width: 8px;
  height: 8px;
}
.tag.loss span {
  background: #e6000c;
  color: #fff;
}
.tag.loss span + span {
  color: #7c0006;
}
.tag.gain span {
  background: #12f01c;
  color: #0b6a10;
}
.prices {
  position: relative;
  width: 43px;
  color: #c4c5c8;
}
.prices span {
  position: absolute;
  left: 0;
  width: 41px;
  height: 11px;
  padding-left: 5px;
  line-height: 11px;
  transform: translateY(-50%);
}
.prices .blue {
  background: #2f5ceb;
  color: #fff;
}
.prices .purple {
  height: 21px;
  line-height: 10px;
  background: #5527a8;
  color: #fff;
  transform: translateY(-5px);
}
.prices .red {
  background: #e6000c;
  color: #fff;
}
.prices .lime {
  background: #12f01c;
  color: #0d8a14;
  transform: translateY(6px);
}
.time-row {
  height: 19px;
  display: flex;
  background: #000;
  border-top: 1px solid #242528;
  color: #c4c5c8;
}
.time-row button {
  width: 43px;
}
.time-row button svg {
  width: 8px;
  height: 8px;
}
.hours {
  flex: 1;
  position: relative;
  overflow: hidden;
}
.hours span {
  position: absolute;
  line-height: 16px;
  transform: translateX(-50%);
}
.range {
  height: 18px;
  display: flex;
  align-items: center;
  gap: 7px;
  padding: 0 5px 0 7px;
  font-size: 7px;
}
.range .clock {
  margin-left: auto;
}

/* order */
.order {
  align-self: start;
  height: 307px;
  font-size: 6px;
}
.order .panel-tab {
  padding-left: 4px;
  font-size: 7px;
}
.ball {
  width: 7px;
  height: 7px;
  border-radius: 50%;
  background: radial-gradient(#79a6f0, #2858c0);
}
.box {
  width: 8px;
  height: 8px;
  border: 1px solid #77787a;
  color: #77787a;
  font-size: 6px;
  line-height: 6px;
  text-align: center;
}
.order-body {
  padding: 5px 2px;
  display: flex;
  flex-direction: column;
  gap: 5px;
}
.field {
  position: relative;
  height: 21px;
  border: 1px solid #b4b4b4;
  border-radius: 2px;
}
.field label {
  position: absolute;
  left: 4px;
  top: -4px;
  padding: 0 2px;
  background: #0c0d10;
  font-size: 5px;
  line-height: 6px;
  font-weight: bold;
}
.field select,
.field input {
  width: 100%;
  height: 100%;
  padding-left: 6px;
  font-size: 8px;
}
.field.contract select {
  padding-left: 11px;
}
.contract::before {
  content: "";
  position: absolute;
  left: 4px;
  top: 8px;
  width: 3px;
  height: 3px;
  background: #3f9a48;
}
.with-gear {
  display: flex;
  align-items: center;
}
.with-gear .field {
  flex: 1;
}
.with-gear button {
  width: 20px;
  padding-left: 3px;
  color: #fff;
}
.with-gear svg {
  width: 8px;
  height: 8px;
}
.ticket {
  width: 128px;
  margin: 0 auto;
}
.quote {
  display: flex;
  justify-content: center;
  align-items: center;
  gap: 4px;
  text-align: center;
}
.quote b {
  display: block;
}
.quote span {
  height: 15px;
  padding: 0 1px;
  line-height: 13px;
  border: 1px solid #1f5a2a;
  border-radius: 3px;
  white-space: nowrap;
}
.quote .ask {
  border-color: #5a1f26;
}
.combine {
  height: 18px;
  margin-top: 6px;
  font-weight: bold;
}
.position {
  display: flex;
  align-items: center;
  justify-content: center;
  gap: 4px;
  margin-top: 8px;
}
.position span {
  color: #8e2630;
}
.position button {
  width: 12px;
  height: 12px;
  background: #3f4042;
  border-radius: 2px;
  color: #77787a;
  font-size: 5px;
}
.sizes {
  display: flex;
  justify-content: center;
  gap: 9px;
  margin-top: 4px;
}
.sizes div {
  display: flex;
  gap: 2px;
}
.sizes button {
  width: 11px;
  height: 11px;
  border-radius: 50%;
  background: #5a5b5d;
  color: #eee;
  font-weight: bold;
}
.sizes button.on {
  background: #a3a4a6;
}
.ticket .with-gear {
  margin-top: 8px;
}
.ticket .with-gear button {
  width: 15px;
}
.ticket .bracket {
  height: 18px;
  color: #b0b0b0;
}
.bracket select {
  font-size: 6px;
}
.bracket label {
  font-weight: normal;
}
.actions {
  display: grid;
  grid-template-columns: minmax(0, 1fr);
  gap: 2px;
  margin-top: 10px;
}
.actions div {
  display: grid;
  grid-template-columns: 1fr 1fr;
  gap: 2px;
}
.actions .three {
  grid-template-columns: 41fr 46fr 41fr;
  gap: 1px;
}
.actions button {
  min-width: 0;
  height: 13px;
  background: #5a5b5c;
  border-radius: 2px;
  color: #eee;
  font-size: 5px;
  font-weight: bold;
}
.actions .trade button {
  height: 14px;
}
.actions .buy {
  background: #45a44c;
}
.actions .sell {
  background: #b9303c;
}
footer {
  height: 29px;
  display: flex;
  align-items: flex-end;
  padding: 0 4px 1px 2px;
  font-size: 5px;
  line-height: 7px;
  color: #b0b0b0;
}
footer p {
  flex: 1;
  margin: 0;
  text-align: center;
}

/* windows */
.taskbar {
  height: 24px;
  display: flex;
  align-items: center;
  gap: 8px;
  padding: 0 9px;
  background: linear-gradient(90deg, #f3e8bd, #f0e8c8 4%, #dde3ea 8%, #efe6c2 12%, #ece3bf 22%, #d8e2e8 32%, #d2e2ec 60%, #dbe3ee 80%, #d6f3f5);
  color: #3b4a5c;
  font-family: "Noto Sans", sans-serif;
  font-size: 6px;
}
.taskbar a {
  position: relative;
  width: 14px;
  height: 22px;
  display: flex;
  align-items: center;
  justify-content: center;
}
.taskbar a svg {
  width: 12px;
  height: 12px;
  stroke: none;
}
.open::after {
  content: "";
  position: absolute;
  bottom: 0;
  width: 3px;
  height: 1px;
  background: #8a8a80;
}
.current::after {
  width: 8px;
  background: #1a66b8;
}
.badge {
  position: absolute;
  right: -1px;
  top: 2px;
  width: 7px;
  height: 7px;
  border-radius: 50%;
  background: #d93a3a;
  color: #fff;
  font-size: 4px;
  line-height: 7px;
  text-align: center;
}
.badge.blue {
  background: #2474c8;
}
.badge.dot {
  width: 5px;
  height: 5px;
  background: #e01010;
}
.tray {
  margin-left: auto;
  display: flex;
  align-items: center;
  gap: 7px;
}
.tray svg {
  width: 8px;
  height: 8px;
}
.date {
  line-height: 8px;
  text-align: right;
}
.activate {
  position: fixed;
  right: 58px;
  bottom: 57px;
  color: #8b8b8b;
  font: 7px/10px "Noto Sans", sans-serif;
}
.activate b {
  display: block;
  font-size: 9px;
  line-height: 13px;
  font-weight: normal;
}
```
FILE: script.js
```
const TOP_PRICE = 24498.69;
const PRICE_SPAN = 42.68;

// time is in 5 minute slots counted from 16:00
const candles = [
  { t: -2, high: 24482.75, low: 24440, open: 24440, close: 24477.5 },
  { t: -1, high: 24489.75, low: 24475.5, open: 24478.5, close: 24482 },
  { t: 0, high: 24484, low: 24465, open: 24483.25, close: 24468.75 },
  { t: 1, high: 24471.75, low: 24462, open: 24467.75, close: 24468.75 },
  { t: 2, high: 24478.25, low: 24460, open: 24466.75, close: 24471.25 },
  { t: 3, high: 24478, low: 24469, open: 24471.5, close: 24473.75 },
  { t: 4, high: 24476.25, low: 24465.5, open: 24473.25, close: 24475 },
  { t: 5, high: 24477, low: 24472.25, open: 24475, close: 24473.5 },
];

const levels = [
  { price: 24473.5, from: 0, cls: "last" },
  { price: 24489.75, t: -1, cls: "level", label: "5m wick" },
  { price: 24481, t: -1, cls: "level" },
  { price: 24478.5, t: -1, cls: "level", label: "5m" },
  { price: 24467.25, from: 0, cls: "entry" },
  { price: 24459.75, t: -2, cls: "level" },
  { price: 24459.75, from: 0, cls: "target" },
];

const tags = [
  { price: 24489.75, cls: "blue" },
  { price: 24481, cls: "blue" },
  { price: 24478.5, cls: "blue" },
  { price: 24473.5, cls: "purple", extra: "03:51" },
  { price: 24467.25, cls: "red" },
  { price: 24459.75, cls: "blue" },
  { price: 24459.75, cls: "lime" },
];

const orders = [
  { price: 24467.25, at: 85, cls: "loss", text: "$-375.00", qty: "3" },
  { price: 24459.75, at: 71, cls: "gain", text: "- +$450.00", qty: "3" },
];

const hours = ["13:15", "13:30", "13:45", "15:00", "15:15", "15:30", "15:45", "16:00", "16:15", "16:30", "16:45", "17:00"];

const y = (price) => ((TOP_PRICE - price) / PRICE_SPAN) * 100 + "%";
const xNum = (t) => 60.47 + t * 2.906;
const x = (t) => xNum(t) + "%";

let svg = "";
levels.forEach((l) => {
  const from = l.t === undefined ? "0" : x(l.t);
  svg += `<line class="${l.cls}" x1="${from}" x2="100%" y1="${y(l.price)}" y2="${y(l.price)}" />`;
  if (l.label) {
    svg += `<text x="99.5%" y="${y(l.price)}" dy="8">${l.label}</text>`;
  }
});
candles.forEach((c) => {
  const up = c.close > c.open;
  const top = Math.max(c.open, c.close);
  const h = (Math.abs(c.open - c.close) / PRICE_SPAN) * 100;
  svg += `<line class="wick" x1="${x(c.t)}" x2="${x(c.t)}" y1="${y(c.high)}" y2="${y(c.low)}" />`;
  svg += `<rect class="${up ? "up" : "down"}" x="${xNum(c.t) - 1.18}%" y="${y(top)}" width="2.36%" height="${h}%" />`;
});
document.getElementById("lines").innerHTML = svg;

let scale = "";
for (let p = 24498; p >= 24458; p -= 2) {
  if (p !== 24490 && p !== 24460) {
    scale += `<span style="top: ${y(p)}">${p.toFixed(2)}</span>`;
  }
}
tags.forEach((t) => {
  scale += `<span class="${t.cls}" style="top: ${y(t.price)}">${t.price.toFixed(2)}${t.extra ? "<br>" + t.extra : ""}</span>`;
});
document.getElementById("prices").innerHTML = scale;

orders.forEach((o) => {
  document.getElementById("plot").insertAdjacentHTML(
    "beforeend",
    `<div class="tag ${o.cls}" style="left: ${o.at}%; top: ${y(o.price)}">
      <span>${o.text}</span><span>${o.qty}</span>
      <button aria-label="Cancel order"><svg><use href="#close" /></svg></button>
    </div>`
  );
});

document.getElementById("hours").innerHTML = hours
  .map((h, i) => {
    const label = h.endsWith(":00") ? `<b>${h}</b>` : h;
    return `<span style="left: ${-0.55 + i * 8.717}%">${label}</span>`;
  })
  .join("");
```
